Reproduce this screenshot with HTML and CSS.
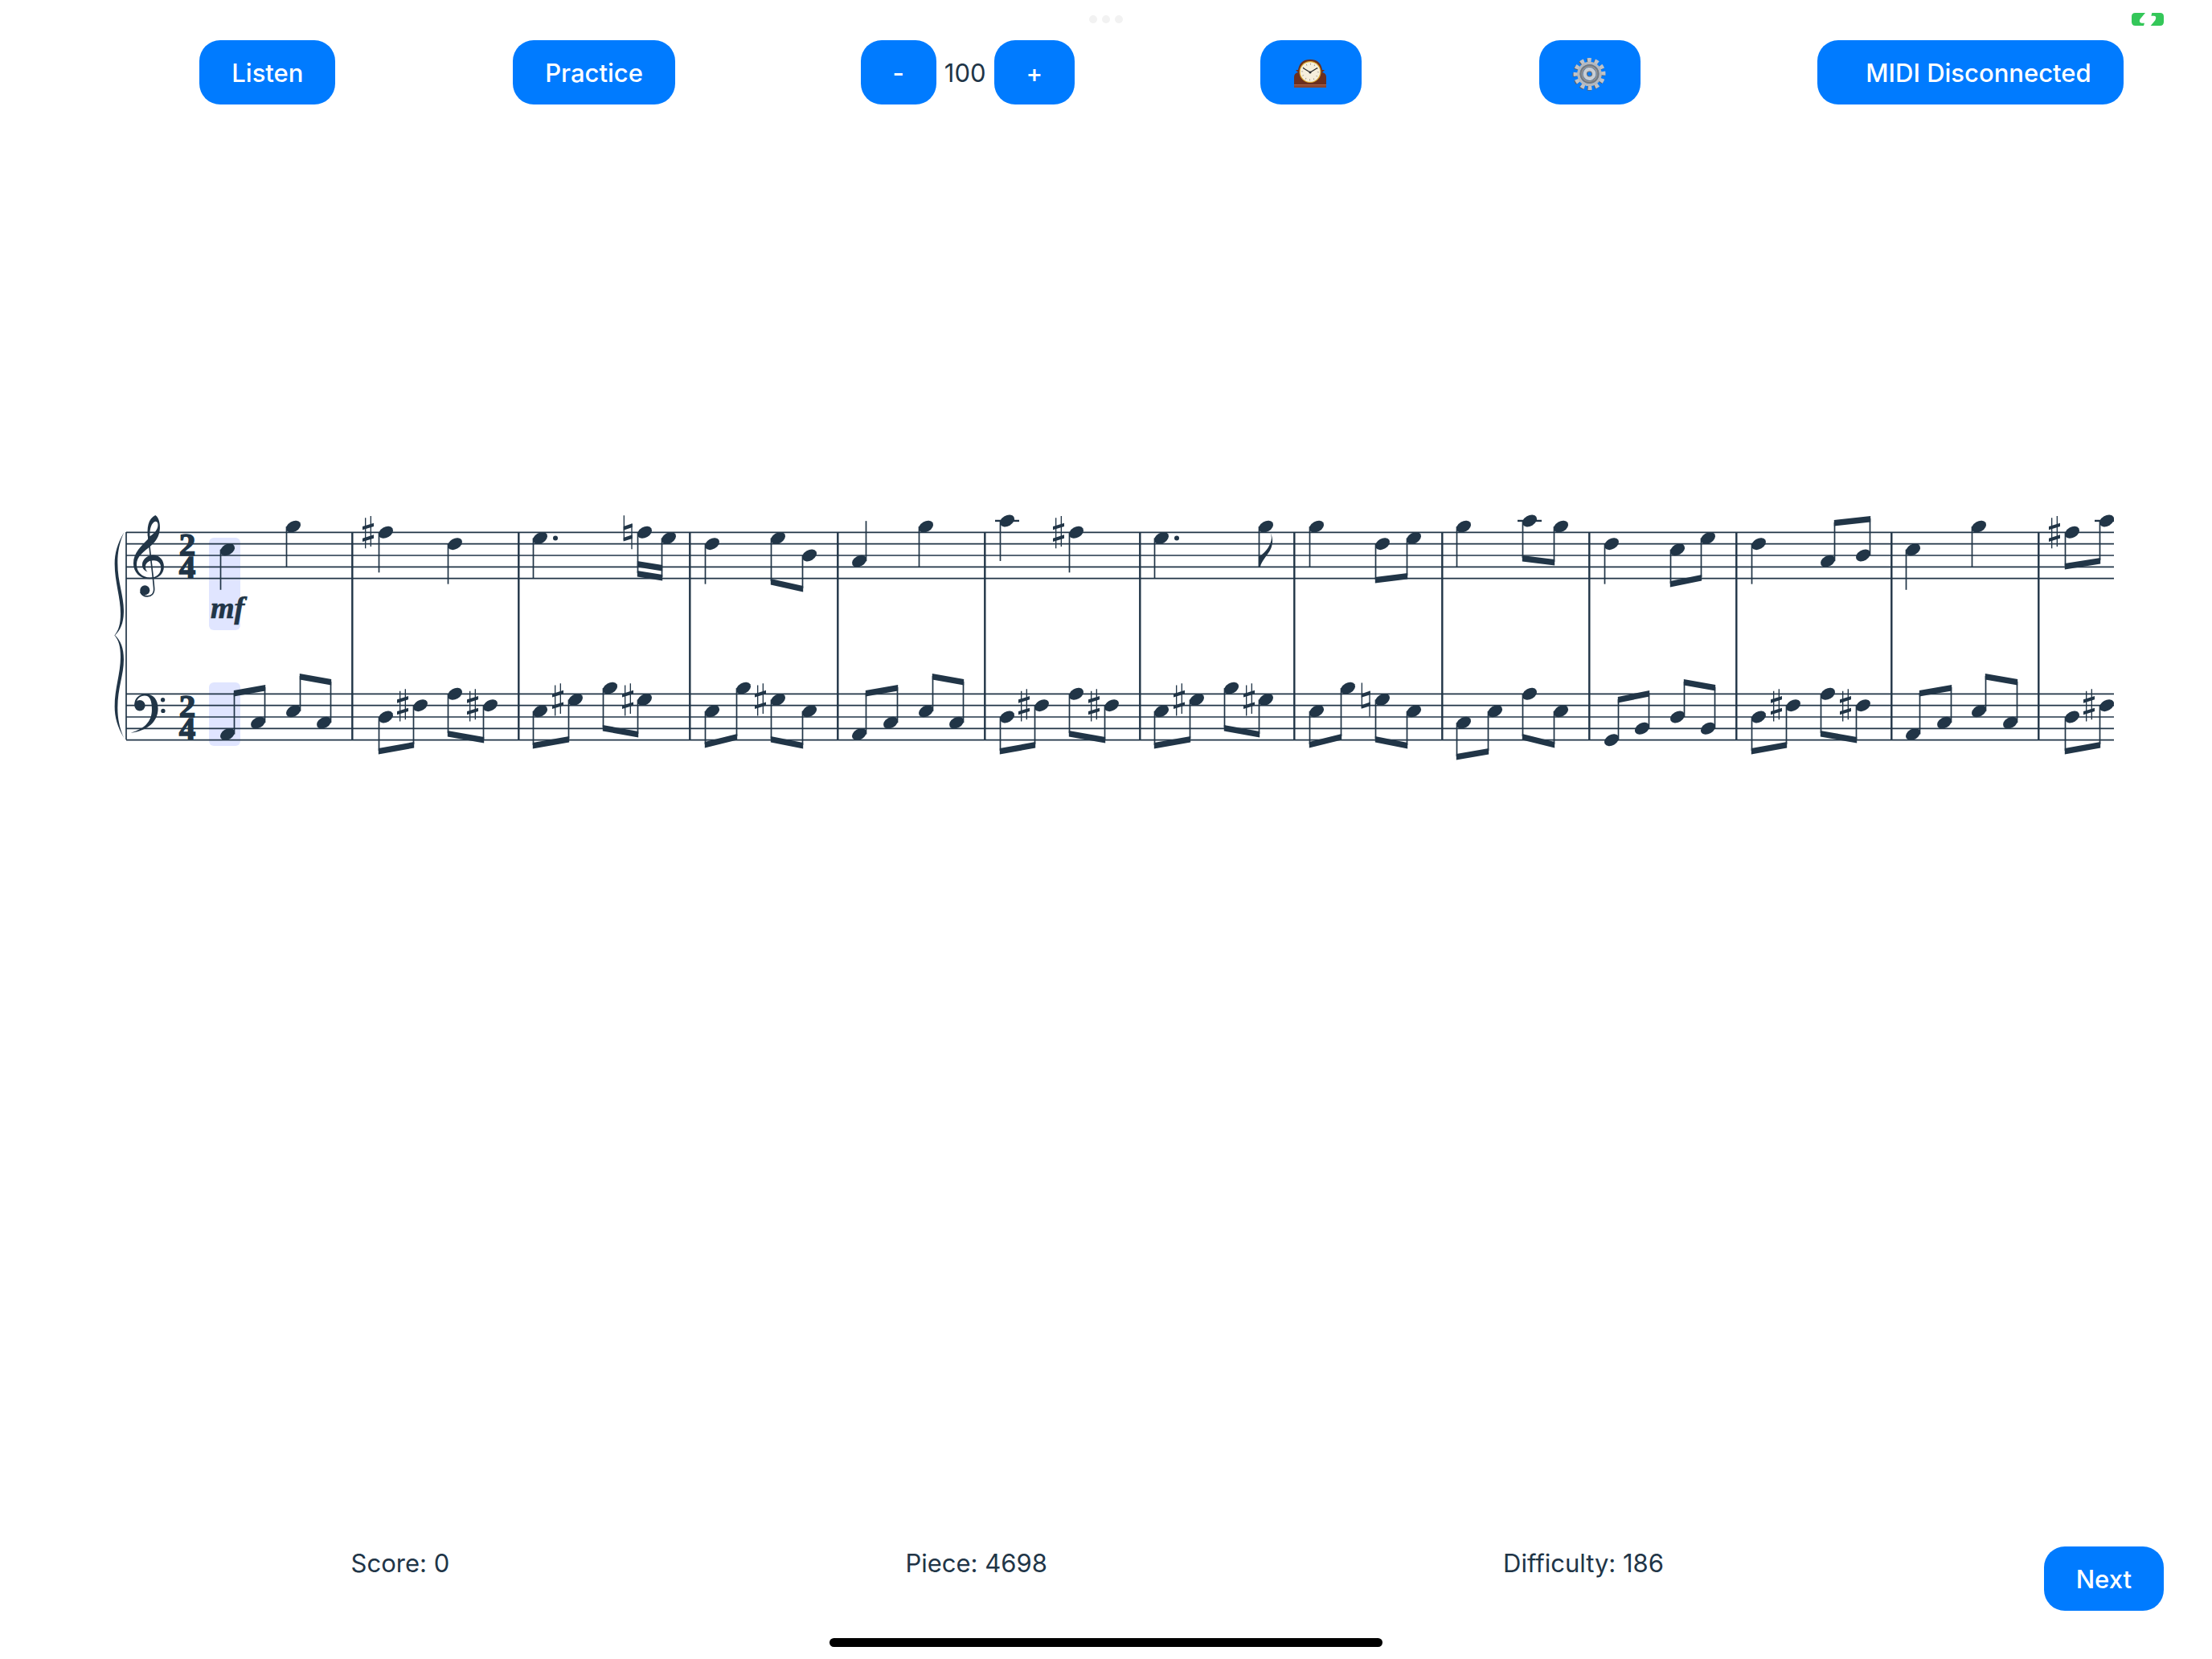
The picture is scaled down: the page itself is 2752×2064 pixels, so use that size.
FILE: index.html
```
<!DOCTYPE html>
<html lang="en">
<head>
    <meta charset="UTF-8">
    <meta name="viewport" content="width=device-width, initial-scale=1.0">
    <title>Sight Reading</title>
    <link rel="stylesheet" href="styles.css">
</head>
<body>
    <div class="status-bar">
        <div class="dots"><i></i><i></i><i></i></div>
        <svg class="battery" viewBox="0 0 120 48" aria-label="Charging">
            <path d="M14 0H51L31 24Q26 37 38 38H48L45 48H14Q0 48 0 34V14Q0 0 14 0Z"/>
            <path d="M76 0H106Q120 0 120 14V34Q120 48 106 48H71L88 28Q95 12 84 11H73Z"/>
        </svg>
    </div>

    <header class="toolbar">
        <button type="button">Listen</button>
        <button type="button">Practice</button>
        <div class="tempo">
            <button type="button" aria-label="Slower">-</button>
            <span>100</span>
            <button type="button" aria-label="Faster">+</button>
        </div>
        <button type="button" aria-label="Metronome">
            <svg class="icon" viewBox="0 0 46 46">
                <path d="M2 38V28Q2 23 7 22L4 19H7Q9 6 22 6T37 19H40L37 22Q42 23 42 28V38Z" fill="#6b2f1e"/>
                <path d="M2 37H42V41H2Z" fill="#8a4632"/>
                <path d="M2 37.500H42" stroke="#a4624b"/>
                <circle cx="22" cy="21.500" r="13.500" fill="#d9a62e"/>
                <circle cx="22" cy="21.500" r="12.300" fill="#f6efdc"/>
                <circle cx="22" cy="21.500" r="9.800" fill="none" stroke="#8b8577" stroke-width="2" stroke-dasharray="0.700 4.431"/>
                <path d="M13 16.500L22 22L31 16.500" fill="none" stroke="#2b2b2b" stroke-width="1.300"/>
                <circle cx="22" cy="22" r="1.500" fill="#2b2b2b"/>
            </svg>
        </button>
        <button type="button" aria-label="Settings">
            <svg class="icon" viewBox="0 0 46 46">
                <g fill="none" transform="rotate(-10 22.500 24)">
                    <circle cx="21.500" cy="24.500" r="17" stroke="#5b5f66" stroke-width="6" stroke-dasharray="4.600 4.301"/>
                    <circle cx="22.500" cy="24" r="17" stroke="#bfc3c9" stroke-width="6" stroke-dasharray="4.600 4.301"/>
                    <circle cx="22.500" cy="24" r="13.500" stroke="#b4b8be" stroke-width="3.500"/>
                    <circle cx="22.500" cy="24" r="10" stroke="#74797f" stroke-width="4"/>
                    <circle cx="22.500" cy="24" r="9.500" stroke="#9a9ea4" stroke-width="1"/>
                    <circle cx="22.500" cy="24" r="5.300" stroke="#c9cdd2" stroke-width="5.400"/>
                    <circle cx="22.500" cy="24" r="3" stroke="#5b6470" stroke-width="1"/>
                </g>
            </svg>
        </button>
        <button type="button" class="midi">MIDI Disconnected</button>
    </header>

    <main class="score">
        <svg id="sheet" width="2600" height="340" viewBox="0 0 2600 340" role="img" aria-label="Sheet music">
            <defs>
                <ellipse id="head" rx="9.700" ry="6.600" transform="rotate(-30)"/>
                <g id="sharp" transform="scale(0.333)">
                    <path d="M-12 -54h4V60h-4zM8 -61h4V53h-4z"/>
                    <path d="M-21 -22L21 -35V-22L-21 -9zM-21 22L21 9V22L-21 35z"/>
                </g>
                <g id="natural" transform="scale(0.333)">
                    <path d="M-16 -63h4V30h-4zM13 -32h4V63h-4z"/>
                    <path d="M-16 -22L17 -33V-19L-16 -8zM-16 20L17 9V23L-16 34z"/>
                </g>
                <path id="flag" transform="scale(0.333)" d="M-2 0V-38C12 -44 32 -62 42 -88C48 -102 47 -112 43 -125C52 -108 52 -86 44 -68C32 -42 10 -24 4 0Z"/>
                <path id="brace" d="M73 127C48 170 38 205 38 245C38 312 60 370 60 430C60 470 53 492 38 511V513C60 492 72 465 72 420C72 362 49 315 49 240C49 200 56 165 73 127Z"/>
                <g id="treble-clef">
                    <path fill-rule="evenodd" d="M163 152C157 110 163 76 190 63C204 72 208 95 207 112C205 143 192 160 175 176C148 200 120 216 120 248C120 276 142 296 170 296C196 296 211 280 211 259C211 241 198 232 184 232C165 232 153 242 153 256C153 265 156 270 161 275C148 270 140 260 141 247C142 228 160 212 183 212C207 213 222 232 222 255C222 283 200 301 168 301C132 301 108 275 108 243C108 203 138 178 163 152ZM170 142C167 115 176 90 190 86C199 86 201 96 199 106C195 122 186 130 170 142Z"/>
                    <path d="M164 135C168 190 181 285 185 335C187 357 174 366 160 366C148 366 138 360 134 348" fill="none" stroke="#213547" stroke-width="5"/>
                    <circle cx="151" cy="343" r="18"/>
                </g>
                <g id="bass-clef">
                    <path d="M112 775C110 748 128 731 153 731C183 731 200 752 200 785C200 835 160 868 98 876C148 862 177 835 177 790C177 755 170 737 150 737C133 737 122 748 120 762Z"/>
                    <circle cx="132" cy="774" r="20"/>
                    <circle cx="218" cy="753" r="8"/>
                    <circle cx="219" cy="794" r="8"/>
                </g>
            </defs>
            <rect class="cursor" x="130" y="49" width="39" height="115" rx="6"/>
            <rect class="cursor" x="130" y="229" width="39" height="79" rx="6"/>
            <g transform="scale(0.333)">
                <use href="#brace"/>
                <use href="#brace" transform="matrix(1 0 0 -1 0 1023)"/>
                <use href="#treble-clef"/>
                <use href="#bass-clef"/>
            </g>
            <g class="time">
                <text x="103" y="71">2</text>
                <text x="103" y="99">4</text>
                <text x="103" y="272">2</text>
                <text x="103" y="300">4</text>
            </g>
            <text class="dynamic" x="132" y="149">mf</text>
            <g id="music"></g>
        </svg>
    </main>

    <footer class="bottom-bar">
        <div class="stats">
            <span>Score: 0</span>
            <span>Piece: 4698</span>
            <span>Difficulty: 186</span>
        </div>
        <button type="button">Next</button>
    </footer>
    <div class="home-indicator"></div>

    <script src="score.js"></script>
</body>
</html>
```
FILE: styles.css
```
* {
    margin: 0;
    padding: 0;
    box-sizing: border-box;
}

body {
    min-height: 100vh;
    display: flex;
    flex-direction: column;
    background-color: #fff;
    color: #213547;
    font-family: Inter, "Liberation Sans", sans-serif;
    font-size: 31px;
    line-height: 42px;
    overflow-x: hidden;
}

button {
    height: 80px;
    padding: 2px 40px 0;
    border: none;
    border-radius: 26px;
    background-color: #007bff;
    color: #fff;
    font: inherit;
    font-weight: 500;
    white-space: nowrap;
    cursor: pointer;
}

.status-bar {
    display: grid;
    grid-template-columns: 1fr auto 1fr;
    align-items: center;
    height: 50px;
    padding: 0 60px 2px;
}

.dots {
    grid-column: 2;
    display: flex;
    gap: 6px;
}

.dots i {
    width: 10px;
    height: 10px;
    border-radius: 50%;
    background-color: #f2f2f2;
}

.battery {
    justify-self: end;
    width: 40px;
    height: 16px;
    fill: #34c759;
}

/* Toolbar */
.toolbar {
    display: flex;
    justify-content: space-around;
    align-items: center;
    padding-left: 138px;
}

.tempo {
    display: flex;
    align-items: center;
    gap: 10px;
    margin: 0 10px;
}

.tempo span {
    padding-top: 2px;
}

.icon {
    display: block;
    width: 46px;
    height: 46px;
}

.midi {
    padding-left: 60px;
}

/* Sheet music */
.score {
    flex: 1;
    margin: 0 122px 0 130px;
    padding-top: 490px;
    overflow: hidden;
}

.score svg {
    display: block;
    fill: #213547;
}

.score .cursor {
    fill: #e0e5ff;
}

.score .staff,
.score .stem {
    stroke: #213547;
    stroke-width: 1.7;
}

.score .ledger,
.score .bar {
    stroke: #213547;
    stroke-width: 2.4;
}

.time {
    font-family: "Liberation Serif", serif;
    font-size: 41px;
    font-weight: bold;
    text-anchor: middle;
    stroke: #213547;
    stroke-width: 1.5;
}

.dynamic {
    font-family: "Liberation Serif", serif;
    font-size: 38px;
    font-weight: bold;
    font-style: italic;
    stroke: #213547;
    stroke-width: 0.7;
}

/* Bottom */
.bottom-bar {
    display: flex;
    align-items: flex-start;
    padding: 0 60px 0 153px;
}

.stats {
    flex: 1;
    display: flex;
    justify-content: space-around;
    margin-right: 189px;
}

.home-indicator {
    width: 25%;
    height: 11px;
    margin: 34px auto 15px;
    border-radius: 6px;
    background-color: #000;
}
```
FILE: score.js
```
// Staff geometry: pos counts half spaces down from the top line
const TOP = { treble: 42, bass: 243 };
const STEP = 7.17;
const STEM = 50;
const music = document.getElementById('music');

function add(name, attrs) {
    const el = document.createElementNS('http://www.w3.org/2000/svg', name);
    for (const key in attrs) el.setAttribute(key, attrs[key]);
    music.appendChild(el);
}

function line(cls, x1, y1, x2, y2) {
    add('line', { class: cls, x1, y1, x2, y2 });
}

function glyph(name, x, y) {
    add('use', { href: '#' + name, x: 0, y: 0, transform: `translate(${x} ${y})` });
}

// Groups: notes are [x, pos, accidental, accidental x]
// beam is [direction, y of the top edge at the left, at the right]
const treble = [
    { n: [[153, 3]] }, { n: [[235, -1]] },
    { n: [[350, 0, 'sharp', 328]] }, { n: [[436, 2]] },
    { n: [[542, 1]], dot: true }, { n: [[672, 0, 'natural', 651], [702, 1]], beam: ['down', 90, 95], double: true },
    { n: [[756, 2]] }, { n: [[838, 1], [877, 4]], beam: ['down', 100, 109] },
    { n: [[939, 5]], up: true }, { n: [[1022, -1]] },
    { n: [[1123, -2]] }, { n: [[1209, 0, 'sharp', 1187]] },
    { n: [[1315, 1]], dot: true }, { n: [[1445, -1]], flag: true },
    { n: [[1508, -1]] }, { n: [[1590, 2], [1629, 1]], beam: ['down', 98, 93] },
    { n: [[1691, -1]] }, { n: [[1773, -2], [1812, -1]], beam: ['down', 71, 76] },
    { n: [[1875, 2]] }, { n: [[1957, 3], [1995, 1]], beam: ['down', 103, 95] },
    { n: [[2058, 2]] }, { n: [[2144, 5], [2188, 4]], beam: ['up', 27, 22] },
    { n: [[2250, 3]] }, { n: [[2332, -1]] },
    { n: [[2448, 0, 'sharp', 2426], [2491, -2]], beam: ['down', 81, 74] }
];

const bass = [
    { n: [[153, 7], [191, 5]], beam: ['up', 239, 232] },
    { n: [[235, 3], [273, 5]], beam: ['up', 218, 225] },
    { n: [[350, 4], [393, 2, 'sharp', 371]], beam: ['down', 311, 303] },
    { n: [[436, 0], [480, 2, 'sharp', 458]], beam: ['down', 289, 297] },
    { n: [[542, 3], [586, 1, 'sharp', 564]], beam: ['down', 304, 296] },
    { n: [[629, -1], [672, 1, 'sharp', 651]], beam: ['down', 282, 290] },
    { n: [[756, 3], [795, -1]], beam: ['down', 303, 293] },
    { n: [[838, 1, 'sharp', 816], [877, 3]], beam: ['down', 296, 304] },
    { n: [[939, 7], [978, 5]], beam: ['up', 239, 232] },
    { n: [[1022, 3], [1060, 5]], beam: ['up', 218, 225] },
    { n: [[1123, 4], [1166, 2, 'sharp', 1144]], beam: ['down', 311, 303] },
    { n: [[1209, 0], [1253, 2, 'sharp', 1231]], beam: ['down', 289, 297] },
    { n: [[1315, 3], [1359, 1, 'sharp', 1337]], beam: ['down', 304, 296] },
    { n: [[1402, -1], [1445, 1, 'sharp', 1424]], beam: ['down', 282, 290] },
    { n: [[1508, 3], [1547, -1]], beam: ['down', 303, 293] },
    { n: [[1590, 1, 'natural', 1569], [1629, 3]], beam: ['down', 296, 304] },
    { n: [[1691, 5], [1730, 3]], beam: ['down', 318, 311] },
    { n: [[1773, 0], [1812, 3]], beam: ['down', 293, 303] },
    { n: [[1875, 8], [1913, 6]], beam: ['up', 247, 239] },
    { n: [[1957, 4], [1995, 6]], beam: ['up', 225, 232] },
    { n: [[2058, 4], [2101, 2, 'sharp', 2080]], beam: ['down', 311, 303] },
    { n: [[2144, 0], [2188, 2, 'sharp', 2166]], beam: ['down', 289, 297] },
    { n: [[2250, 7], [2289, 5]], beam: ['up', 239, 232] },
    { n: [[2332, 3], [2371, 5]], beam: ['up', 218, 225] },
    { n: [[2448, 4], [2491, 2, 'sharp', 2469]], beam: ['down', 311, 303] }
];

const bars = [308, 515, 728, 912, 1095, 1288, 1480, 1664, 1847, 2030, 2223, 2406];

function beamShape(x1, y1, x2, y2) {
    add('path', { d: `M${x1 - 0.7} ${y1}L${x2 + 0.7} ${y2}V${y2 + 7.5}L${x1 - 0.7} ${y1 + 7.5}Z` });
}

function drawStaff(top, groups) {
    for (let i = 0; i < 5; i++) {
        line('staff', 27, top + i * 2 * STEP, 2600, top + i * 2 * STEP);
    }

    groups.forEach(g => {
        const up = g.up || (g.beam && g.beam[0] === 'up');
        const side = up ? 8.5 : -8.5;

        g.n.forEach(([x, pos, accidental, ax], i) => {
            const y = top + pos * STEP;
            let end = up ? y - STEM : y + STEM;
            if (g.beam) end = g.beam[i + 1] + 3;

            glyph('head', x, y);
            line('stem', x + side, y, x + side, end);
            if (accidental) glyph(accidental, ax, y);
            if (pos === -2) line('ledger', x - 15, y, x + 15, y);
            if (g.dot) add('circle', { cx: x + 19, cy: y, r: 3 });
            if (g.flag) glyph('flag', x + side, end);
        });

        if (g.beam) {
            const x1 = g.n[0][0] + side;
            const x2 = g.n[1][0] + side;
            beamShape(x1, g.beam[1], x2, g.beam[2]);
            if (g.double) beamShape(x1, g.beam[1] - 12, x2, g.beam[2] - 12);
        }
    });
}

drawStaff(TOP.treble + 0.3, treble);
drawStaff(TOP.bass + 0.3, bass);

const bottom = TOP.bass + 8 * STEP;
line('staff', 27, TOP.treble, 27, bottom);
bars.forEach(x => line('bar', x + 0.3, TOP.treble, x + 0.3, bottom));
```
